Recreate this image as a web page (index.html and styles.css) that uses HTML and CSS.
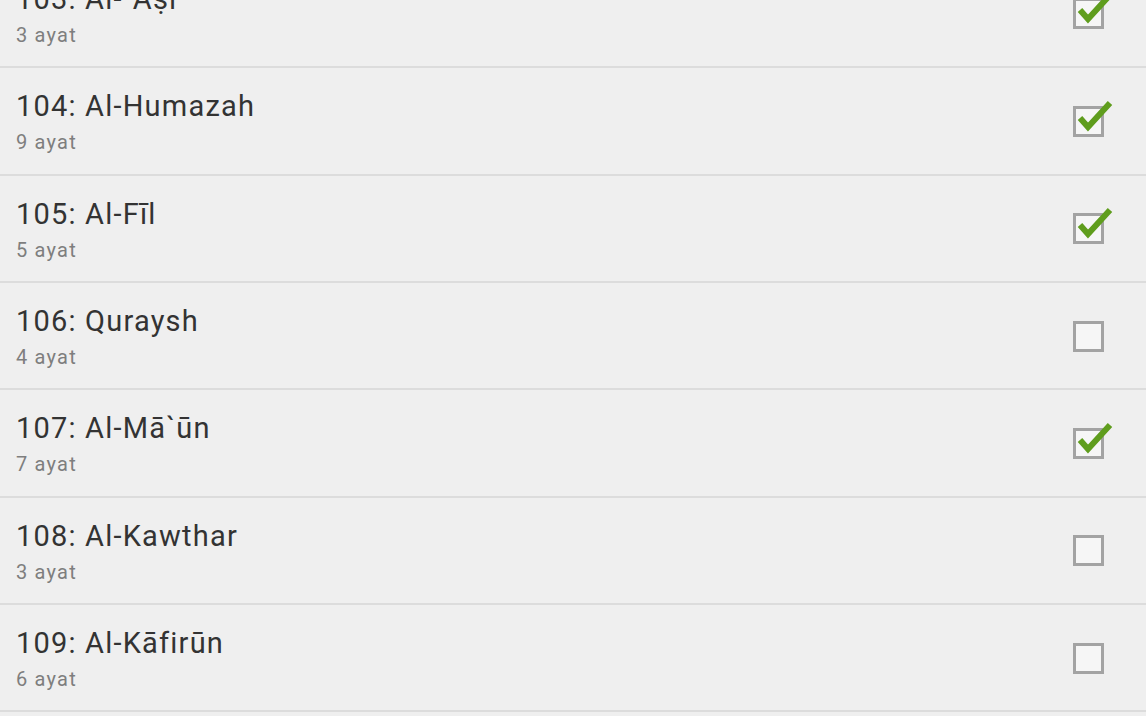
FILE: index.html
```html
<!DOCTYPE html>
<html>
<head>
<meta charset="utf-8">
<link rel="stylesheet" href="styles.css">
</head>
<body>
<ul class="list">
  <li class="row"><div class="text"><div class="title">103: Al-`Aṣr</div><div class="sub">3 ayat</div></div><div class="box checked"><svg class="tick" viewBox="0 0 44 40" width="44" height="40"><polyline points="9,20 17,29 39,5"/></svg></div></li>
  <li class="row"><div class="text"><div class="title">104: Al-Humazah</div><div class="sub">9 ayat</div></div><div class="box checked"><svg class="tick" viewBox="0 0 44 40" width="44" height="40"><polyline points="9,20 17,29 39,5"/></svg></div></li>
  <li class="row"><div class="text"><div class="title">105: Al-Fīl</div><div class="sub">5 ayat</div></div><div class="box checked"><svg class="tick" viewBox="0 0 44 40" width="44" height="40"><polyline points="9,20 17,29 39,5"/></svg></div></li>
  <li class="row"><div class="text"><div class="title">106: Quraysh</div><div class="sub">4 ayat</div></div><div class="box"></div></li>
  <li class="row"><div class="text"><div class="title">107: Al-Mā`ūn</div><div class="sub">7 ayat</div></div><div class="box checked"><svg class="tick" viewBox="0 0 44 40" width="44" height="40"><polyline points="9,20 17,29 39,5"/></svg></div></li>
  <li class="row"><div class="text"><div class="title">108: Al-Kawthar</div><div class="sub">3 ayat</div></div><div class="box"></div></li>
  <li class="row"><div class="text"><div class="title">109: Al-Kāfirūn</div><div class="sub">6 ayat</div></div><div class="box"></div></li>
</ul>
</body>
</html>
```
FILE: styles.css
```css
html, body {
  margin: 0;
  padding: 0;
  background: #efefef;
  overflow: hidden;
  height: 716px;
}
.list {
  list-style: none;
  margin: -39.2px 0 0 0;
  padding: 0;
  font-family: Roboto, "Liberation Sans", sans-serif;
}
.row {
  height: 107.35px;
  box-sizing: border-box;
  border-bottom: 2px solid #dcdcdc;
  display: flex;
  align-items: center;
  justify-content: space-between;
  padding: 0 42px 0 16px;
}
.text {
  align-self: flex-start;
  padding-top: 23px;
}
.title {
  font-size: 29px;
  line-height: 30px;
  letter-spacing: 1.2px;
  color: #333333;
  white-space: nowrap;
}
.sub {
  margin-top: 10px;
  font-size: 20px;
  line-height: 23px;
  letter-spacing: 1.2px;
  color: #7e7e7e;
}
.box {
  position: relative;
  width: 31px;
  height: 31px;
  box-sizing: border-box;
  border: 3px solid #a3a3a3;
  background: #f6f6f6;
  margin-top: 1px;
}
.tick {
  position: absolute;
  left: -5px;
  top: -11px;
}
.tick polyline {
  fill: none;
  stroke: #5f9d1d;
  stroke-width: 6;
  stroke-linejoin: miter;
  stroke-linecap: butt;
}
```
